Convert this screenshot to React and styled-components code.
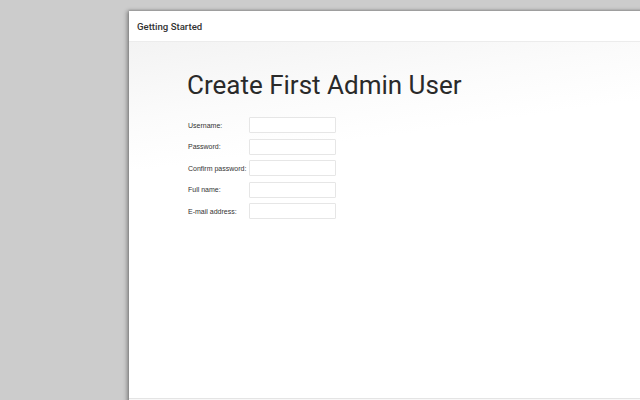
import React from 'react';
import styled, { createGlobalStyle } from 'styled-components';

const GlobalStyle = createGlobalStyle`
  html, body {
    margin: 0;
    padding: 0;
    background: #cccccc;
    overflow: hidden;
  }
  body {
    width: 640px;
    height: 400px;
  }
`;

const Page = styled.div`
  height: 400px;
  padding: 11px 0 0 129px;
  box-sizing: border-box;
  overflow: hidden;
`;

const Dialog = styled.div`
  width: 560px;
  height: 420px;
  background: #ffffff;
  box-shadow: -2px 0 4px rgba(0, 0, 0, 0.35), 0 -1px 2px rgba(0, 0, 0, 0.15);
  display: flex;
  flex-direction: column;
`;

const Header = styled.div`
  height: 30px;
  border-bottom: 1px solid #ececec;
  display: flex;
  align-items: center;
  padding-left: 8px;
  font-family: Roboto, "Noto Sans", sans-serif;
  font-size: 9.6px;
  font-weight: 500;
  color: #333333;
`;

const Content = styled.div`
  height: 356px;
  box-sizing: border-box;
  padding: 27px 0 0 58px;
  background: linear-gradient(172deg, #f3f3f3 0%, #fbfbfb 18%, #ffffff 30%);
`;

const Title = styled.h1`
  margin: 0 0 16px;
  font-family: Roboto, "Noto Sans", sans-serif;
  font-size: 26px;
  font-weight: 400;
  line-height: 32px;
  color: #2a2a2a;
`;

const Form = styled.div`
  display: grid;
  grid-template-columns: 61px 87px;
  grid-auto-rows: 16px;
  row-gap: 5.5px;
  margin-left: 1px;
  align-items: center;
`;

const Label = styled.label`
  font-family: "Liberation Sans", Arial, sans-serif;
  font-size: 7px;
  color: #333333;
  white-space: nowrap;
`;

const Input = styled.input`
  box-sizing: border-box;
  width: 87px;
  height: 16px;
  margin: 0;
  padding: 0 3px;
  border: 1px solid #e6e6e6;
  border-radius: 1px;
  background: #ffffff;
  font-family: "Liberation Sans", Arial, sans-serif;
  font-size: 7px;
  outline: none;
`;

const Footer = styled.div`
  flex: 1;
  border-top: 1px solid #e4e4e4;
  background: #f8f8f8;
`;

const fields = [
  { name: 'username', label: 'Username:', type: 'text' },
  { name: 'password1', label: 'Password:', type: 'password' },
  { name: 'password2', label: 'Confirm password:', type: 'password' },
  { name: 'fullname', label: 'Full name:', type: 'text' },
  { name: 'email', label: 'E-mail address:', type: 'text' },
];

export default function App() {
  return (
    <>
      <GlobalStyle />
      <Page>
        <Dialog>
          <Header>Getting Started</Header>
          <Content>
            <Title>Create First Admin User</Title>
            <Form>
              {fields.map((f) => (
                <React.Fragment key={f.name}>
                  <Label htmlFor={f.name}>{f.label}</Label>
                  <Input id={f.name} name={f.name} type={f.type} />
                </React.Fragment>
              ))}
            </Form>
          </Content>
          <Footer />
        </Dialog>
      </Page>
    </>
  );
}
